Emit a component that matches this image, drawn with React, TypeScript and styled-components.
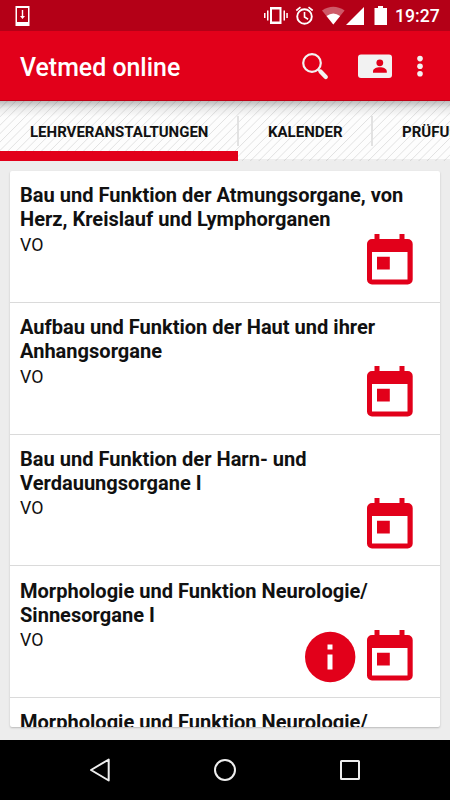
import React from 'react';
import styled, { createGlobalStyle } from 'styled-components';

const RED = '#e2001a';

const Global = createGlobalStyle`
  * { box-sizing: border-box; }
  body { margin: 0; background: #ededed; font-family: Roboto, sans-serif; }
  svg { display: block; flex: none; }
`;

const Screen = styled.div`
  width: 450px;
  height: 800px;
  display: flex;
  flex-direction: column;
  overflow: hidden;
  background: #ededed;
`;

const StatusBar = styled.header`
  flex: none;
  height: 31px;
  padding: 0 10px 0 15px;
  display: flex;
  align-items: center;
  justify-content: space-between;
  background: #b40017;
`;

const StatusIcons = styled.div`
  display: flex;
  align-items: center;
`;

const Clock = styled.span`
  margin-left: 5px;
  width: 45px;
  font-size: 17.6px;
  font-weight: 500;
  line-height: 31px;
  padding-top: 1px;
  color: #fff;
  white-space: nowrap;
`;

const AppBar = styled.div`
  flex: none;
  height: 70px;
  padding: 0 10px 0 20px;
  display: flex;
  align-items: center;
  justify-content: space-between;
  background: ${RED};
  border-bottom: 1px solid #c00016;
`;

const AppTitle = styled.h1`
  margin: 5px 0 0;
  font-size: 24.9px;
  font-weight: 500;
  line-height: 30px;
  color: #fff;
  white-space: nowrap;
`;

const Tabs = styled.nav`
  flex: none;
  height: 60px;
  display: flex;
  background:
    linear-gradient(rgba(0, 0, 0, 0.26), rgba(0, 0, 0, 0.08) 7px, transparent 16px),
    linear-gradient(transparent 58px, rgba(0, 0, 0, 0.06) 58px),
    repeating-linear-gradient(135deg, #fdfdfd 0 4.5px, #e2e2e2 5.2px, #fdfdfd 5.95px);
`;

const Tab = styled.div<{ $width: number; $active?: boolean }>`
  flex: none;
  width: ${p => p.$width}px;
  height: 60px;
  display: flex;
  align-items: center;
  border-bottom: 10px solid ${p => (p.$active ? RED : 'transparent')};
  padding: 12px 0 0 30px;
  font-size: 15px;
  font-weight: 700;
  color: #111;
  white-space: nowrap;
`;

const TabDivider = styled.span`
  flex: none;
  width: 2px;
  height: 30px;
  margin: 15px -1px 0 -1px;
  background: #e2e2e2;
`;

const Content = styled.main`
  flex: 1;
  min-height: 0;
  padding: 10px 10px 13px;
`;

const Card = styled.div`
  height: 100%;
  overflow: hidden;
  border-radius: 2px;
  background: #fff;
  box-shadow: 0 1px 2px rgba(0, 0, 0, 0.22);
`;

const Course = styled.article`
  height: 131.75px;
  padding: 12.3px 10px 0;
  border-bottom: 1px solid #dadada;
`;

const CourseTitle = styled.h2`
  margin: 0;
  font-size: 20.06px;
  font-weight: 700;
  line-height: 24px;
  color: #111;
  white-space: nowrap;
`;

const CourseKind = styled.div`
  margin-top: 2.5px;
  font-size: 17.8px;
  line-height: 22px;
  height: 0;
  color: #111;
`;

const CourseActions = styled.div`
  display: flex;
  justify-content: flex-end;
  gap: 10px;
  padding: 0.5px 17px 0 0;
`;

const NavBar = styled.footer`
  flex: none;
  height: 60px;
  display: flex;
  align-items: center;
  justify-content: space-between;
  padding: 0 88px;
  background: #000;
`;

const CalendarIcon = () => (
  <svg width="47" height="52" viewBox="0 0 47 52">
    <path
      fill={RED}
      fillRule="evenodd"
      d="M8.500 0h5v5h20V0h5v5h3.200a5 5 0 0 1 5 5v35.500a5 5 0 0 1-5 5H6a5 5 0 0 1-5-5V10a5 5 0 0 1 5-5h2.500zM6 18v27.500h35.500V18zM11 22.800h12.800v12.700H11z"
    />
  </svg>
);

const InfoIcon = () => (
  <svg width="51" height="54" viewBox="0 0 51 54">
    <circle cx="25.200" cy="27" r="25.200" fill={RED} />
    <path fill="#fff" d="M22.500 14.500h5v5h-5zM22.500 24.500h5v15h-5z" />
  </svg>
);

const courses = [
  { lines: ['Bau und Funktion der Atmungsorgane, von', 'Herz, Kreislauf und Lymphorganen'] },
  { lines: ['Aufbau und Funktion der Haut und ihrer', 'Anhangsorgane'] },
  { lines: ['Bau und Funktion der Harn- und', 'Verdauungsorgane I'] },
  { lines: ['Morphologie und Funktion Neurologie/', 'Sinnesorgane I'], info: true },
];

export default function App() {
  return (
    <Screen>
      <Global />
      <StatusBar>
        <svg width="15" height="20" viewBox="0 0 15 20">
          <path fill="#fff" fillRule="evenodd" d="M.500 0h14v20H.500zM2 2v14h11V2z" />
          <path fill="#fff" d="M6.800 4h1.400v6H10l-2.500 3L5 10h1.800z" />
        </svg>
        <StatusIcons>
          <svg width="126" height="20" viewBox="264 6 126 20" fill="#fff">
            <path d="M270 7h11.500v17H270zm2 2.500v12h7.500v-12z" fillRule="evenodd" />
            <path d="M264 13h1.500v5H264zM267 10.500h1.500v10H267zM283.500 10.500h1.500v10h-1.500zM286.300 13h1.500v5h-1.500z" />
            <circle cx="304.500" cy="16.500" r="7.300" fill="none" stroke="#fff" strokeWidth="1.900" />
            <path d="M304.500 12v5l3.600 2.200M296.300 10.500l4.200-3.300M312.700 10.500l-4.200-3.300" fill="none" stroke="#fff" strokeWidth="1.600" />
            <path d="M333.300 24.500L322 10.500q11.300-7.500 22.600 0z" opacity=".35" />
            <path d="M333.300 24.500L326.500 16q6.800-5 13.600 0z" />
            <path d="M364 7v18h-18z" />
            <path d="M378 6h5v2h4v17h-12.500V8h3.500z" />
          </svg>
          <Clock>19:27</Clock>
        </StatusIcons>
      </StatusBar>
      <AppBar>
        <AppTitle>Vetmed online</AppTitle>
        <svg width="138" height="30" viewBox="302 51 138 30" fill="#f2f2f2">
          <circle cx="312" cy="63" r="8.800" fill="none" stroke="#f2f2f2" strokeWidth="2.200" />
          <path d="M317.700 69l2.500 2.500" stroke="#f2f2f2" strokeWidth="2" />
          <path d="M320.500 71.500l5.300 5.500" stroke="#f2f2f2" strokeWidth="4.200" strokeLinecap="round" />
          <rect x="358" y="54.500" width="34" height="23.500" rx="3" />
          <circle cx="379.800" cy="62.800" r="3.400" fill={RED} />
          <path fill={RED} d="M373 72.700v-1.200c0-5.600 13.800-5.600 13.800 0v1.200z" />
          <circle cx="420" cy="58.600" r="2.800" />
          <circle cx="420" cy="66.200" r="2.800" />
          <circle cx="420" cy="73.800" r="2.800" />
        </svg>
      </AppBar>
      <Tabs>
        <Tab $width={238} $active>LEHRVERANSTALTUNGEN</Tab>
        <TabDivider />
        <Tab $width={134}>KALENDER</Tab>
        <TabDivider />
        <Tab $width={134}>PRÜFUNGEN</Tab>
      </Tabs>
      <Content>
        <Card>
          {courses.map(({ lines, info }, i) => (
            <Course key={i}>
              <CourseTitle>
                {lines[0]}
                <br />
                {lines[1]}
              </CourseTitle>
              <CourseKind>VO</CourseKind>
              <CourseActions>
                {info && <InfoIcon />}
                <CalendarIcon />
              </CourseActions>
            </Course>
          ))}
          <Course>
            <CourseTitle>Morphologie und Funktion Neurologie/</CourseTitle>
          </Course>
        </Card>
      </Content>
      <NavBar>
        <svg width="24" height="26" viewBox="0 0 24 26" fill="none" stroke="#eee" strokeWidth="2">
          <path d="M20.700 2.500v21L3 13z" strokeLinejoin="round" />
        </svg>
        <svg width="24" height="24" viewBox="0 0 24 24" fill="none" stroke="#eee" strokeWidth="2">
          <circle cx="12" cy="12" r="10" />
        </svg>
        <svg width="24" height="24" viewBox="0 0 24 24" fill="none" stroke="#eee" strokeWidth="2">
          <rect x="3" y="3" width="18" height="18" rx=".5" />
        </svg>
      </NavBar>
    </Screen>
  );
}
